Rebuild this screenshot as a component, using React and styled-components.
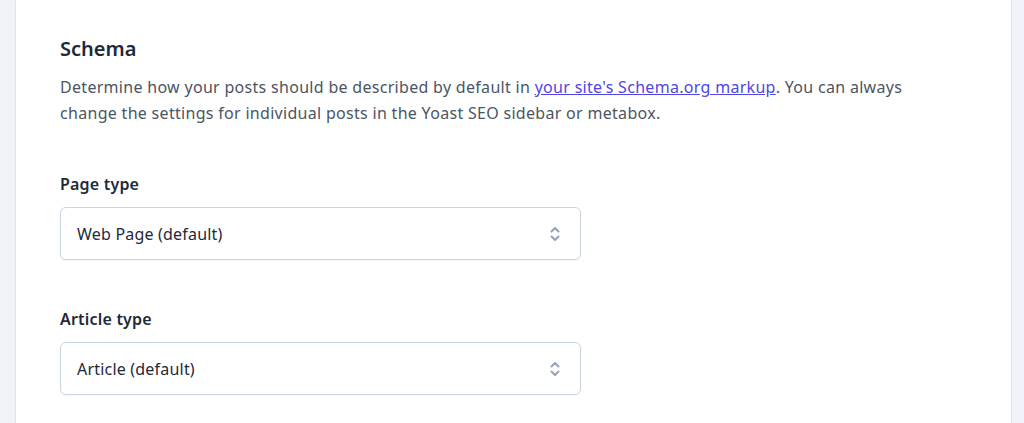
import React from "react";
import styled, { createGlobalStyle } from "styled-components";

const Global = createGlobalStyle`
  html, body {
    margin: 0;
    padding: 0;
    background: #f0f3f7;
    font-family: "Noto Sans", "Open Sans", sans-serif;
  }
`;

const Page = styled.div`
  height: 423px;
  overflow: hidden;
  padding: 0 13px 0 16px;
`;

const Card = styled.section`
  background: #fff;
  min-height: 423px;
  padding: 35px 44px 0;
  box-shadow: 0 0 0 1px rgba(15, 23, 42, 0.05), 0 1px 2px rgba(15, 23, 42, 0.06);
  box-sizing: border-box;
`;

const Title = styled.h2`
  margin: 0;
  font-size: 20px;
  line-height: 28px;
  font-weight: 600;
  color: #1e293b;
`;

const Description = styled.p`
  margin: 11px 0 0;
  max-width: 860px;
  font-size: 16px;
  line-height: 26px;
  color: #4b5563;
  letter-spacing: 0.3px;

  a {
    color: #4f46e5;
    text-decoration: underline;
  }
`;

const Fields = styled.div`
  display: flex;
  flex-direction: column;
  gap: 47px;
  margin-top: 46px;
`;

const Field = styled.div`
  display: flex;
  flex-direction: column;
  gap: 11px;
`;

const Label = styled.label`
  font-size: 16px;
  line-height: 24px;
  font-weight: 600;
  color: #1e293b;
  letter-spacing: 0.2px;
`;

const Select = styled.div`
  width: 521px;
  height: 53px;
  box-sizing: border-box;
  display: flex;
  align-items: center;
  justify-content: space-between;
  padding: 0 19px 0 16px;
  border: 1px solid #cbd5e1;
  border-radius: 6px;
  box-shadow: 0 1px 2px rgba(15, 23, 42, 0.05);
  font-size: 16px;
  letter-spacing: 0.2px;
  color: #1e293b;
`;

const Chevrons = () => (
  <svg width="12" height="18" viewBox="0 0 12 18" fill="none">
    <path d="M2.5 6.5 6 3l3.5 3.5M2.5 11.5 6 15l3.5-3.5" stroke="#94a3b8" strokeWidth="2" strokeLinecap="round" strokeLinejoin="round" />
  </svg>
);

function SelectField({ label, value }) {
  return (
    <Field>
      <Label>{label}</Label>
      <Select>
        <span>{value}</span>
        <Chevrons />
      </Select>
    </Field>
  );
}

export default function App() {
  return (
    <Page>
      <Global />
      <Card>
        <Title>Schema</Title>
        <Description>
          Determine how your posts should be described by default in{" "}
          <a href="#schema">your site's Schema.org markup</a>. You can always change the settings for
          individual posts in the Yoast SEO sidebar or metabox.
        </Description>
        <Fields>
          <SelectField label="Page type" value="Web Page (default)" />
          <SelectField label="Article type" value="Article (default)" />
        </Fields>
      </Card>
    </Page>
  );
}
